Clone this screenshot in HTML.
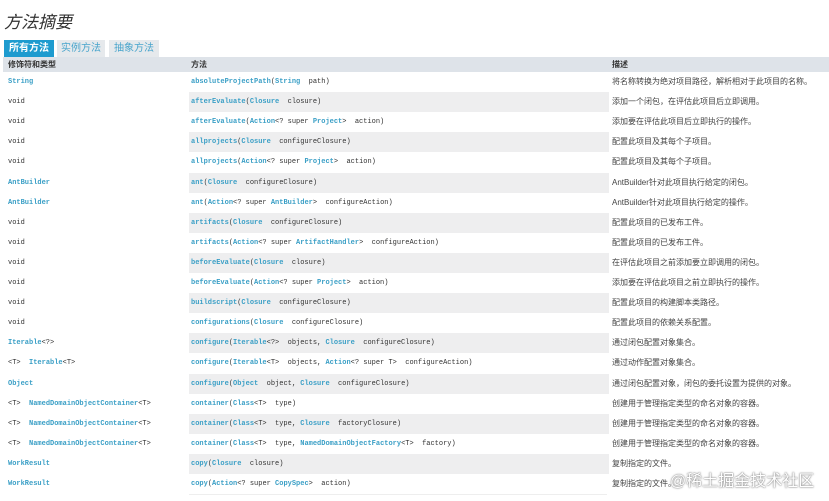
<!DOCTYPE html><html><head><meta charset="utf-8"><style>
body{margin:0;width:829px;height:501px;background:#fff;position:relative;overflow:hidden;font-family:"Liberation Mono","Noto Sans CJK SC",monospace;}
.t{position:absolute;left:4px;top:8px;font:italic 17px "Liberation Sans","Noto Sans CJK SC",sans-serif;color:#333;}
.tab{position:absolute;top:40px;height:17px;font:bold 10px "Liberation Sans","Noto Sans CJK SC",sans-serif;line-height:17px;text-align:center}
.hd{position:absolute;top:57px;left:3px;width:826px;height:15px;background:#dee3e9;font:bold 8px "Liberation Sans","Noto Sans CJK SC",sans-serif;color:#333;line-height:15px}
.r{position:absolute;left:3px;width:826px;height:20px;line-height:20px;font-size:7px;color:#333;white-space:pre}
.r span{position:absolute;top:0;height:20px;line-height:20px}
.c1{left:5px}.c2{left:186px;width:418px;padding-left:2px}.c3{left:609px;font-family:"Liberation Sans","Noto Sans CJK SC",sans-serif;font-size:8px;color:#444}
.s .c2{background:#eeeeef}
b{color:#3a9fc6;font-weight:bold}
.wm{position:absolute;left:670px;top:467px;font:16px "Liberation Sans","Noto Sans CJK SC",sans-serif;color:#fff;text-shadow:0 0 2px #888,0 0 1px #666}
</style></head><body>
<div class="t">方法摘要</div>
<div class="tab" style="left:4px;width:50px;background:#1e9bcf;color:#fff">所有方法</div>
<div class="tab" style="left:57px;width:48px;background:#e6e9ec;color:#4aa5cc;font-weight:normal">实例方法</div>
<div class="tab" style="left:109px;width:50px;background:#e6e9ec;color:#4aa5cc;font-weight:normal">抽象方法</div>
<div class="hd"><span style="position:absolute;left:5px">修饰符和类型</span><span style="position:absolute;left:188px">方法</span><span style="position:absolute;left:609px">描述</span></div>
<div class="r" style="top:72px"><span class="c1"><b>String</b></span><span class="c2"><b>absoluteProjectPath</b>(<b>String</b>  path)</span><span class="c3">将名称转换为绝对项目路径，解析相对于此项目的名称。</span></div>
<div class="r s" style="top:92px"><span class="c1">void</span><span class="c2"><b>afterEvaluate</b>(<b>Closure</b>  closure)</span><span class="c3">添加一个闭包，在评估此项目后立即调用。</span></div>
<div class="r" style="top:112px"><span class="c1">void</span><span class="c2"><b>afterEvaluate</b>(<b>Action</b>&lt;? super <b>Project</b>&gt;  action)</span><span class="c3">添加要在评估此项目后立即执行的操作。</span></div>
<div class="r s" style="top:132px"><span class="c1">void</span><span class="c2"><b>allprojects</b>(<b>Closure</b>  configureClosure)</span><span class="c3">配置此项目及其每个子项目。</span></div>
<div class="r" style="top:152px"><span class="c1">void</span><span class="c2"><b>allprojects</b>(<b>Action</b>&lt;? super <b>Project</b>&gt;  action)</span><span class="c3">配置此项目及其每个子项目。</span></div>
<div class="r s" style="top:173px"><span class="c1"><b>AntBuilder</b></span><span class="c2"><b>ant</b>(<b>Closure</b>  configureClosure)</span><span class="c3">AntBuilder针对此项目执行给定的闭包。</span></div>
<div class="r" style="top:193px"><span class="c1"><b>AntBuilder</b></span><span class="c2"><b>ant</b>(<b>Action</b>&lt;? super <b>AntBuilder</b>&gt;  configureAction)</span><span class="c3">AntBuilder针对此项目执行给定的操作。</span></div>
<div class="r s" style="top:213px"><span class="c1">void</span><span class="c2"><b>artifacts</b>(<b>Closure</b>  configureClosure)</span><span class="c3">配置此项目的已发布工件。</span></div>
<div class="r" style="top:233px"><span class="c1">void</span><span class="c2"><b>artifacts</b>(<b>Action</b>&lt;? super <b>ArtifactHandler</b>&gt;  configureAction)</span><span class="c3">配置此项目的已发布工件。</span></div>
<div class="r s" style="top:253px"><span class="c1">void</span><span class="c2"><b>beforeEvaluate</b>(<b>Closure</b>  closure)</span><span class="c3">在评估此项目之前添加要立即调用的闭包。</span></div>
<div class="r" style="top:273px"><span class="c1">void</span><span class="c2"><b>beforeEvaluate</b>(<b>Action</b>&lt;? super <b>Project</b>&gt;  action)</span><span class="c3">添加要在评估此项目之前立即执行的操作。</span></div>
<div class="r s" style="top:293px"><span class="c1">void</span><span class="c2"><b>buildscript</b>(<b>Closure</b>  configureClosure)</span><span class="c3">配置此项目的构建脚本类路径。</span></div>
<div class="r" style="top:313px"><span class="c1">void</span><span class="c2"><b>configurations</b>(<b>Closure</b>  configureClosure)</span><span class="c3">配置此项目的依赖关系配置。</span></div>
<div class="r s" style="top:333px"><span class="c1"><b>Iterable</b>&lt;?&gt;</span><span class="c2"><b>configure</b>(<b>Iterable</b>&lt;?&gt;  objects, <b>Closure</b>  configureClosure)</span><span class="c3">通过闭包配置对象集合。</span></div>
<div class="r" style="top:353px"><span class="c1">&lt;T&gt;  <b>Iterable</b>&lt;T&gt;</span><span class="c2"><b>configure</b>(<b>Iterable</b>&lt;T&gt;  objects, <b>Action</b>&lt;? super T&gt;  configureAction)</span><span class="c3">通过动作配置对象集合。</span></div>
<div class="r s" style="top:374px"><span class="c1"><b>Object</b></span><span class="c2"><b>configure</b>(<b>Object</b>  object, <b>Closure</b>  configureClosure)</span><span class="c3">通过闭包配置对象，闭包的委托设置为提供的对象。</span></div>
<div class="r" style="top:394px"><span class="c1">&lt;T&gt;  <b>NamedDomainObjectContainer</b>&lt;T&gt;</span><span class="c2"><b>container</b>(<b>Class</b>&lt;T&gt;  type)</span><span class="c3">创建用于管理指定类型的命名对象的容器。</span></div>
<div class="r s" style="top:414px"><span class="c1">&lt;T&gt;  <b>NamedDomainObjectContainer</b>&lt;T&gt;</span><span class="c2"><b>container</b>(<b>Class</b>&lt;T&gt;  type, <b>Closure</b>  factoryClosure)</span><span class="c3">创建用于管理指定类型的命名对象的容器。</span></div>
<div class="r" style="top:434px"><span class="c1">&lt;T&gt;  <b>NamedDomainObjectContainer</b>&lt;T&gt;</span><span class="c2"><b>container</b>(<b>Class</b>&lt;T&gt;  type, <b>NamedDomainObjectFactory</b>&lt;T&gt;  factory)</span><span class="c3">创建用于管理指定类型的命名对象的容器。</span></div>
<div class="r s" style="top:454px"><span class="c1"><b>WorkResult</b></span><span class="c2"><b>copy</b>(<b>Closure</b>  closure)</span><span class="c3">复制指定的文件。</span></div>
<div class="r" style="top:474px"><span class="c1"><b>WorkResult</b></span><span class="c2"><b>copy</b>(<b>Action</b>&lt;? super <b>CopySpec</b>&gt;  action)</span><span class="c3">复制指定的文件。</span></div>
<div style="position:absolute;left:189px;top:494px;width:418px;height:1px;background:#eee"></div>
<div class="wm">@稀土掘金技术社区</div>
</body></html>
